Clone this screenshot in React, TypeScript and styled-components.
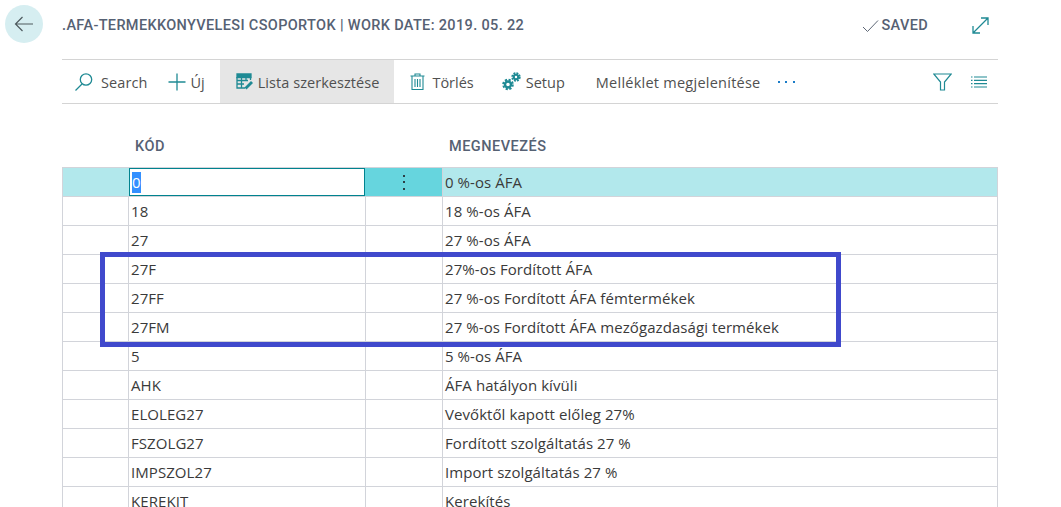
import React from 'react'
import styled, { createGlobalStyle } from 'styled-components'

const GlobalStyle = createGlobalStyle`
  html, body {
    margin: 0;
    padding: 0;
    background: #fff;
    overflow: hidden;
  }
  body {
    font-family: 'Open Sans', 'Noto Sans', sans-serif;
  }
`

const Page = styled.div`
  position: relative;
  width: 1061px;
  height: 507px;
  overflow: hidden;
  display: grid;
  grid-template-columns: 62px 936px;
  grid-template-rows: 59px auto;
`

const BackCell = styled.div`
  padding: 5px 0 0 5px;
`

const BackButton = styled.div`
  width: 38px;
  height: 38px;
  border-radius: 50%;
  background: #d6eef1;
  display: flex;
  align-items: center;
  justify-content: center;
`

const Header = styled.div`
  display: flex;
  align-items: flex-start;
  padding-top: 16px;
  box-sizing: border-box;
  height: 59px;
`

const Title = styled.div`
  flex: 1;
  font-family: Roboto, sans-serif;
  font-weight: 500;
  font-size: 14.5px;
  line-height: 19px;
  letter-spacing: 0.35px;
  color: #566173;
  white-space: nowrap;
`

const Saved = styled.div`
  display: flex;
  align-items: center;
  gap: 2px;
  font-family: Roboto, sans-serif;
  font-weight: 500;
  font-size: 14.5px;
  line-height: 19px;
  letter-spacing: 0.35px;
  color: #566173;
  margin-right: 44px;
`

const ExpandIcon = styled.div`
  width: 17px;
  height: 17px;
  margin: 1px 9px 0 0;
`

const Main = styled.div`
  grid-column: 2;
`

const Toolbar = styled.div`
  display: flex;
  align-items: stretch;
  height: 45px;
  box-sizing: border-box;
  border-top: 1.5px solid #d4d4d4;
  border-bottom: 1.5px solid #d4d4d4;
`

const ToolItem = styled.div<{ $active?: boolean; $pad?: string; $gap?: number; $track?: number }>`
  display: flex;
  align-items: center;
  gap: ${(p) => p.$gap ?? 5}px;
  padding: ${(p) => p.$pad || '0 15px'};
  background: ${(p) => (p.$active ? '#e6e6e6' : 'transparent')};
  font-size: 14.5px;
  letter-spacing: ${(p) => p.$track ?? 0}px;
  line-height: 20px;
  color: #505050;
  white-space: nowrap;
`

const ToolLabel = styled.span`
  position: relative;
  top: 1px;
`

const MoreDots = styled.div`
  display: flex;
  align-items: center;
  gap: 5.5px;
  margin-left: 2px;
  padding-top: 1px;
  & > i {
    display: block;
    width: 2px;
    height: 2px;
    background: #1a7cc8;
  }
`

const ToolRight = styled.div`
  margin-left: auto;
  display: flex;
  align-items: center;
  gap: 19px;
  padding-right: 11px;
`

const ColumnHeads = styled.div`
  display: grid;
  grid-template-columns: 66px 314px 1fr;
  height: 63px;
  box-sizing: border-box;
  padding-top: 33px;
`

const ColumnHead = styled.div<{ $col: number }>`
  grid-column: ${(p) => p.$col};
  padding-left: 7px;
  font-family: Roboto, sans-serif;
  font-weight: 500;
  font-size: 14.5px;
  line-height: 19px;
  letter-spacing: 0.5px;
  color: #566173;
`

const Table = styled.div`
  border-top: 1.5px solid #d2d4da;
  border-left: 1.5px solid #d2d4da;
  border-right: 1.5px solid #d2d4da;
`

const Row = styled.div<{ $selected?: boolean }>`
  display: grid;
  grid-template-columns: 65px 237px 77px 1fr;
  height: 29px;
  box-sizing: border-box;
  border-bottom: 1.5px solid #d2d4da;
  background: ${(p) => (p.$selected ? '#b2e8ec' : '#fff')};
  font-size: 15px;
  letter-spacing: 0.07px;
  line-height: 29px;
  color: #3a3a3a;
`

const Cell = styled.div<{ $bar?: boolean }>`
  border-left: ${(p) => (p.$bar ? '1.5px solid #d2d4da' : 'none')};
  padding-left: 2px;
  white-space: nowrap;
`

const EditCell = styled.div`
  border: 1.5px solid #00838f;
  background: #fff;
  box-sizing: border-box;
  height: 28px;
  padding-left: 2px;
  line-height: 25px;
  margin-left: 1px;
`

const Selected = styled.span`
  background: #3390ff;
  color: #fff;
  display: inline-block;
  height: 21px;
  line-height: 21px;
  vertical-align: middle;
  margin-top: -1px;
`

const DotsCell = styled.div`
  background: #66d5de;
  display: flex;
  flex-direction: column;
  align-items: center;
  justify-content: center;
  gap: 4.5px;
  height: 28px;
  & > i {
    width: 2px;
    height: 2px;
    background: #2b3f45;
    display: block;
  }
`

const Highlight = styled.div`
  position: absolute;
  left: 100px;
  top: 252px;
  width: 741px;
  height: 95px;
  box-sizing: border-box;
  border: 5px solid #4049cc;
  pointer-events: none;
`

const rows = [
  ['18', '18 %-os ÁFA'],
  ['27', '27 %-os ÁFA'],
  ['27F', '27%-os Fordított ÁFA'],
  ['27FF', '27 %-os Fordított ÁFA fémtermékek'],
  ['27FM', '27 %-os Fordított ÁFA mezőgazdasági termékek'],
  ['5', '5 %-os ÁFA'],
  ['AHK', 'ÁFA hatályon kívüli'],
  ['ELOLEG27', 'Vevőktől kapott előleg 27%'],
  ['FSZOLG27', 'Fordított szolgáltatás 27 %'],
  ['IMPSZOL27', 'Import szolgáltatás 27 %'],
  ['KEREKIT', 'Kerekítés']
]

const teal = '#1f8a94'

const App = () => (
  <Page>
    <GlobalStyle />
    <BackCell>
      <BackButton>
        <svg width="20" height="16" viewBox="0 0 20 16" fill="none" stroke="#4e5a5e" strokeWidth="1.2">
          <path d="M19 8H1.5M8.5 1 1.5 8l7 7" />
        </svg>
      </BackButton>
    </BackCell>
    <Header>
      <Title>.AFA-TERMEKKONYVELESI CSOPORTOK | WORK DATE: 2019. 05. 22</Title>
      <Saved>
        <svg width="17" height="14" viewBox="0 0 17 14" fill="none" stroke="#5c6675" strokeWidth="1">
          <path d="M1 8l4.5 4.5L16 1.5" />
        </svg>
        SAVED
      </Saved>
      <ExpandIcon>
        <svg width="17" height="17" viewBox="0 0 17 17" fill="none" stroke={teal} strokeWidth="1.3">
          <path d="M1 16 16 1M9 1h7v7M1 9v7h7" />
        </svg>
      </ExpandIcon>
    </Header>
    <Main>
      <Toolbar>
        <ToolItem $pad="0 15px 0 12px" $gap={8} $track={0.1}>
          <svg width="19" height="20" viewBox="0 0 19 20" fill="none" stroke={teal} strokeWidth="1.3">
            <circle cx="12" cy="7.5" r="5.7" />
            <path d="M8 12 1.5 18.5" />
          </svg>
          <ToolLabel>Search</ToolLabel>
        </ToolItem>
        <ToolItem $pad="0 15px 0 5px">
          <svg width="18" height="18" viewBox="0 0 18 18" fill="none" stroke={teal} strokeWidth="1.3">
            <path d="M9 0.5v17M0.5 9h17" />
          </svg>
          <ToolLabel>Új</ToolLabel>
        </ToolItem>
        <ToolItem $active $pad="0 15px 0 16px" $gap={4} $track={0.05}>
          <svg width="18" height="17" viewBox="0 0 18 17" fill="none" stroke={teal} strokeWidth="1.3">
            <path d="M1 1h14v3.5H1z" fill={teal} />
            <path d="M1 4v11h8M1 7.5h11M1 11h7M5.5 4v11M10 4v4M14.5 4v3" />
            <path d="M9.5 15.5l6.5-6.5" strokeWidth="2.8" />
          </svg>
          <ToolLabel>Lista szerkesztése</ToolLabel>
        </ToolItem>
        <ToolItem $pad="0 13px 0 16px" $gap={7}>
          <svg width="15" height="17" viewBox="0 0 15 17" fill="none" stroke={teal} strokeWidth="1.1">
            <path d="M0.5 3h14M5 3V1h5v2M2 3v13.5h11V3M5 6v8M7.5 6v8M10 6v8" />
          </svg>
          <ToolLabel>Törlés</ToolLabel>
        </ToolItem>
        <ToolItem $pad="0 16px 0 15px">
          <svg width="19" height="19" viewBox="0 0 19 19" fill="none" stroke={teal}>
            <circle cx="6" cy="12.5" r="3" strokeWidth="2.4" />
            <circle cx="6" cy="12.5" r="4.8" strokeWidth="2" strokeDasharray="2.2 1.57" />
            <circle cx="14" cy="5" r="2.2" strokeWidth="2" />
            <circle cx="14" cy="5" r="3.8" strokeWidth="1.8" strokeDasharray="1.9 1.08" />
          </svg>
          <ToolLabel>Setup</ToolLabel>
        </ToolItem>
        <ToolItem $track={0.25}>
          <ToolLabel>Melléklet megjelenítése</ToolLabel>
        </ToolItem>
        <MoreDots>
          <i />
          <i />
          <i />
        </MoreDots>
        <ToolRight>
          <svg width="19" height="18" viewBox="0 0 19 18" fill="none" stroke={teal} strokeWidth="1.2">
            <path d="M0.8 1h17.4L11.5 9v8h-4V9z" />
          </svg>
          <svg width="16" height="12" viewBox="0 0 16 12" fill="none" stroke={teal} strokeWidth="1.2">
            <path d="M3 1h13M3 4.3h13M3 7.6h13M3 11h13M0 1h1.5M0 4.3h1.5M0 7.6h1.5M0 11h1.5" />
          </svg>
        </ToolRight>
      </Toolbar>
      <ColumnHeads>
        <ColumnHead $col={2}>KÓD</ColumnHead>
        <ColumnHead $col={3}>MEGNEVEZÉS</ColumnHead>
      </ColumnHeads>
      <Table>
        <Row $selected>
          <Cell />
          <EditCell>
            <Selected>0</Selected>
          </EditCell>
          <DotsCell>
            <i />
            <i />
            <i />
          </DotsCell>
          <Cell $bar>0 %-os ÁFA</Cell>
        </Row>
        {rows.map(([code, name]) => (
          <Row key={code}>
            <Cell />
            <Cell $bar>{code}</Cell>
            <Cell $bar />
            <Cell $bar>{name}</Cell>
          </Row>
        ))}
      </Table>
    </Main>
    <Highlight />
  </Page>
)

export default App
